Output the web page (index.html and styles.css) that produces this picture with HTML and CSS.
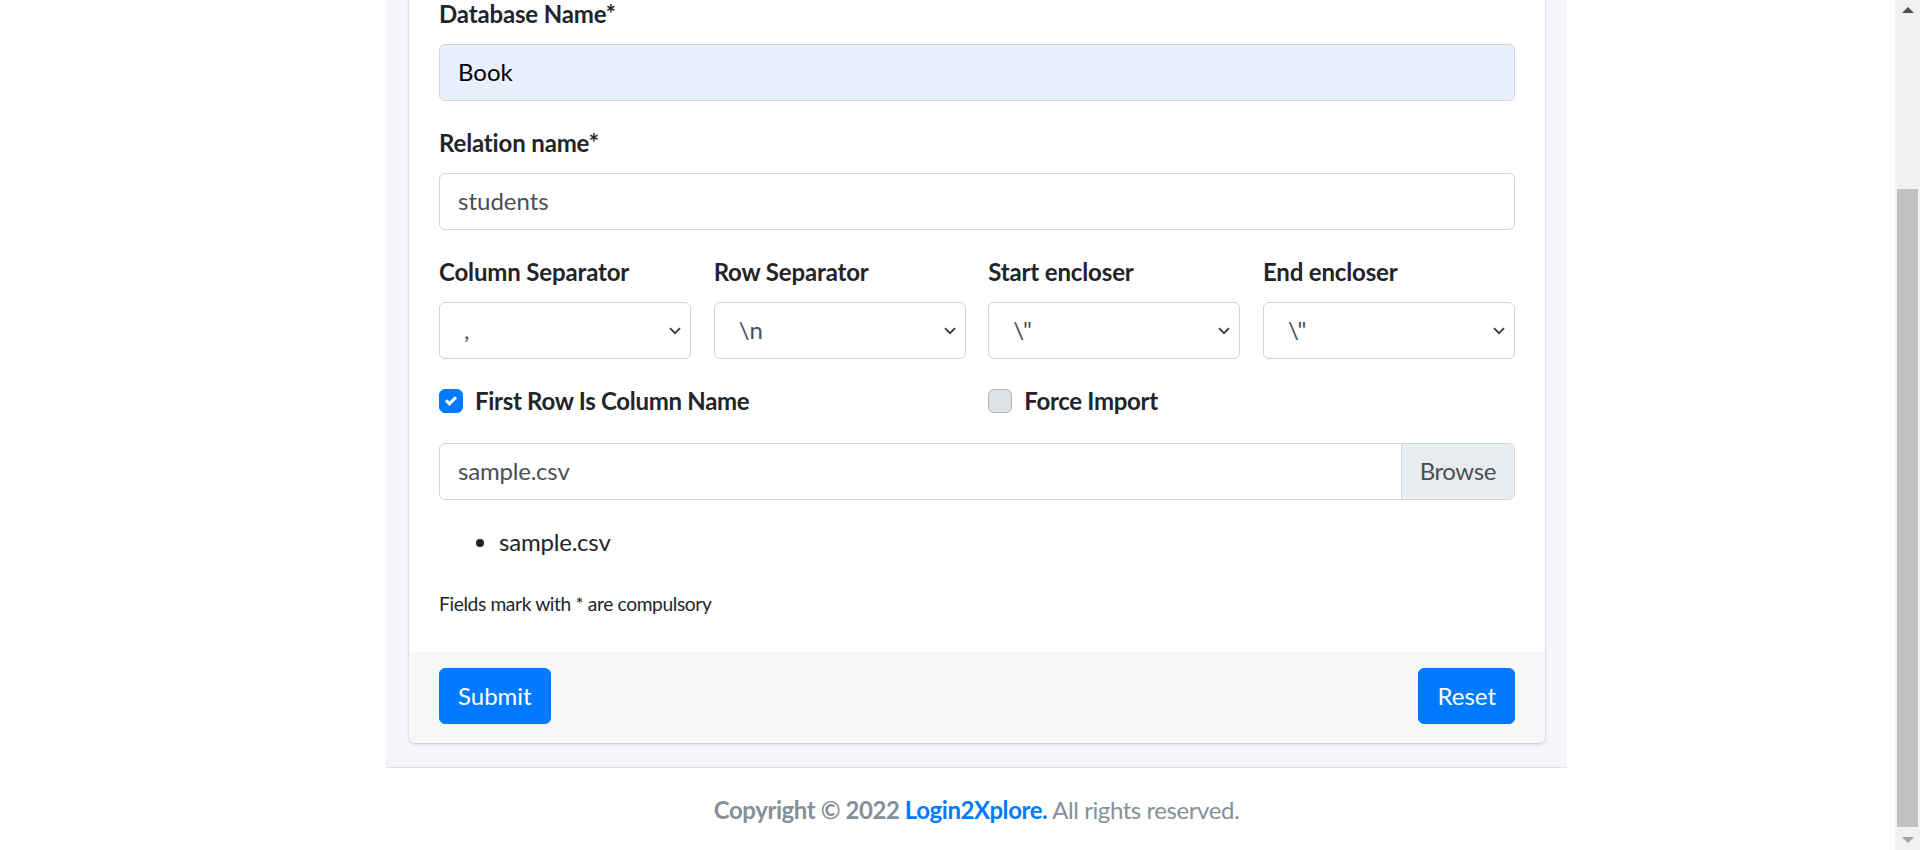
FILE: index.html
```html
<!DOCTYPE html>
<html lang="en">
<head>
<meta charset="utf-8">
<title>Import CSV</title>
<link rel="stylesheet" href="styles.css">
</head>
<body>
<div class="layout">
  <div class="side-space"></div>
  <div class="main">
    <div class="content-wrapper">
      <div class="card">
        <div class="card-body">
          <div class="form-group">
            <label class="form-label">Database Name*</label>
            <div class="form-control autofill">Book</div>
          </div>
          <div class="form-group">
            <label class="form-label">Relation name*</label>
            <div class="form-control">students</div>
          </div>
          <div class="form-group grid-4">
            <div class="col">
              <label class="form-label">Column Separator</label>
              <div class="form-control select">,</div>
            </div>
            <div class="col">
              <label class="form-label">Row Separator</label>
              <div class="form-control select">\n</div>
            </div>
            <div class="col">
              <label class="form-label">Start encloser</label>
              <div class="form-control select">\"</div>
            </div>
            <div class="col">
              <label class="form-label">End encloser</label>
              <div class="form-control select">\"</div>
            </div>
          </div>
          <div class="form-group grid-2">
            <div class="custom-control">
              <span class="check checked"><svg viewBox="0 0 8 8" width="12" height="12"><path d="M6.564.75l-3.59 3.612-1.538-1.55L0 4.26l2.974 2.99L8 2.193z" fill="#fff"/></svg></span>
              <span class="check-label">First Row Is Column Name</span>
            </div>
            <div class="custom-control">
              <span class="check"></span>
              <span class="check-label">Force Import</span>
            </div>
          </div>
          <div class="form-group custom-file">
            <span class="file-name">sample.csv</span>
            <span class="file-btn">Browse</span>
          </div>
          <ul class="file-list">
            <li>sample.csv</li>
          </ul>
          <p class="note"><small>Fields mark with * are compulsory</small></p>
        </div>
        <div class="card-footer">
          <button class="btn">Submit</button>
          <button class="btn">Reset</button>
        </div>
      </div>
    </div>
    <footer class="main-footer">
      <strong>Copyright © 2022 <a href="#">Login2Xplore.</a></strong> All rights reserved.
    </footer>
  </div>
</div>
<div class="scrollbar">
  <span class="arrow up"></span>
  <div class="thumb"></div>
  <span class="arrow down"></span>
</div>
</body>
</html>
```
FILE: styles.css
```css
html, body {
  margin: 0;
  padding: 0;
  overflow: hidden;
  background: #fff;
}
body {
  font-family: Lato, "Liberation Sans", sans-serif;
  font-size: 24px;
  line-height: 36px;
  color: #212529;
}
.layout {
  display: flex;
  width: 1920px;
}
.side-space {
  width: 386px;
  flex: none;
}
.main {
  width: 1181px;
  flex: none;
}
.content-wrapper {
  background: #f4f6f9;
  padding: 0 22px 24px 23px;
}
.card {
  background: #fff;
  margin-top: -34px;
  border-radius: 0 0 6px 6px;
  box-shadow: 0 0 1px rgba(0,0,0,.125), 0 1px 3px rgba(0,0,0,.2);
  overflow: hidden;
}
.card-body {
  padding: 30px;
}
.form-group {
  margin-bottom: 24px;
}
.form-label {
  display: block;
  font-weight: 700;
  margin-bottom: 12px;
  color: #212529;
  letter-spacing: -0.15px;
}
.form-control {
  box-sizing: border-box;
  height: 57px;
  padding: 9px 18px;
  border: 1px solid #ced4da;
  border-radius: 6px;
  color: #495057;
  background: #fff;
}
.form-control.autofill {
  background: #e8f0fe;
  color: #000;
}
.form-control.select {
  padding-left: 24px;
  background-image: url("data:image/svg+xml,%3csvg xmlns='http://www.w3.org/2000/svg' width='12' height='8' viewBox='0 0 12 8'%3e%3cpath fill='none' stroke='%23343a40' stroke-width='1.8' d='M1 1.2l5 5 5-5'/%3e%3c/svg%3e");
  background-repeat: no-repeat;
  background-position: right 9px center;
  background-size: 12px 8px;
}
.grid-4 {
  display: grid;
  grid-template-columns: repeat(4, 1fr);
  column-gap: 22.5px;
}
.grid-2 {
  display: grid;
  grid-template-columns: repeat(2, 1fr);
  column-gap: 22.5px;
}
.custom-control {
  display: flex;
  align-items: center;
  height: 36px;
}
.check {
  box-sizing: border-box;
  width: 24px;
  height: 24px;
  border-radius: 6px;
  border: 1px solid #adb5bd;
  background: #dee2e6;
  display: flex;
  align-items: center;
  justify-content: center;
  margin-right: 12px;
  flex: none;
}
.check.checked {
  background: #007bff;
  border-color: #007bff;
}
.check-label {
  font-weight: 700;
  letter-spacing: -0.3px;
}
.custom-file {
  box-sizing: border-box;
  display: flex;
  height: 57px;
  border: 1px solid #ced4da;
  border-radius: 6px;
  overflow: hidden;
  color: #495057;
}
.file-name {
  flex: 1;
  padding: 9px 18px;
  letter-spacing: -0.2px;
}
.file-btn {
  padding: 9px 18px;
  background: #e9ecef;
  border-left: 1px solid #ced4da;
  letter-spacing: -0.4px;
}
.file-list {
  margin: 0 0 24px;
  padding-left: 60px;
  letter-spacing: -0.2px;
}
.note {
  margin: 0;
}
.note small {
  font-size: 19.2px;
  letter-spacing: -0.37px;
}
.card-footer {
  background: #f7f7f7;
  padding: 16px 30px 19px;
  display: flex;
  justify-content: space-between;
}
.btn {
  font-family: inherit;
  font-size: 24px;
  line-height: 36px;
  padding: 9px 18px;
  border: 1px solid #007bff;
  background: #007bff;
  color: #fff;
  border-radius: 6px;
  cursor: pointer;
}
.main-footer {
  border-top: 1px solid #dee2e6;
  padding: 24px;
  text-align: center;
  color: #869099;
  letter-spacing: -0.43px;
}
.main-footer a {
  color: #007bff;
  text-decoration: none;
}
.scrollbar {
  position: fixed;
  top: 0;
  right: 0;
  width: 25px;
  height: 850px;
  background: #f1f1f1;
}
.arrow {
  position: absolute;
  left: 7px;
  width: 0;
  height: 0;
  border-left: 6px solid transparent;
  border-right: 6px solid transparent;
}
.arrow.up {
  top: 7px;
  border-bottom: 6px solid #505050;
}
.arrow.down {
  bottom: 7px;
  border-top: 6px solid #a3a3a3;
}
.thumb {
  position: absolute;
  left: 2px;
  right: 2px;
  top: 189px;
  bottom: 23px;
  background: #c1c1c1;
}
```
